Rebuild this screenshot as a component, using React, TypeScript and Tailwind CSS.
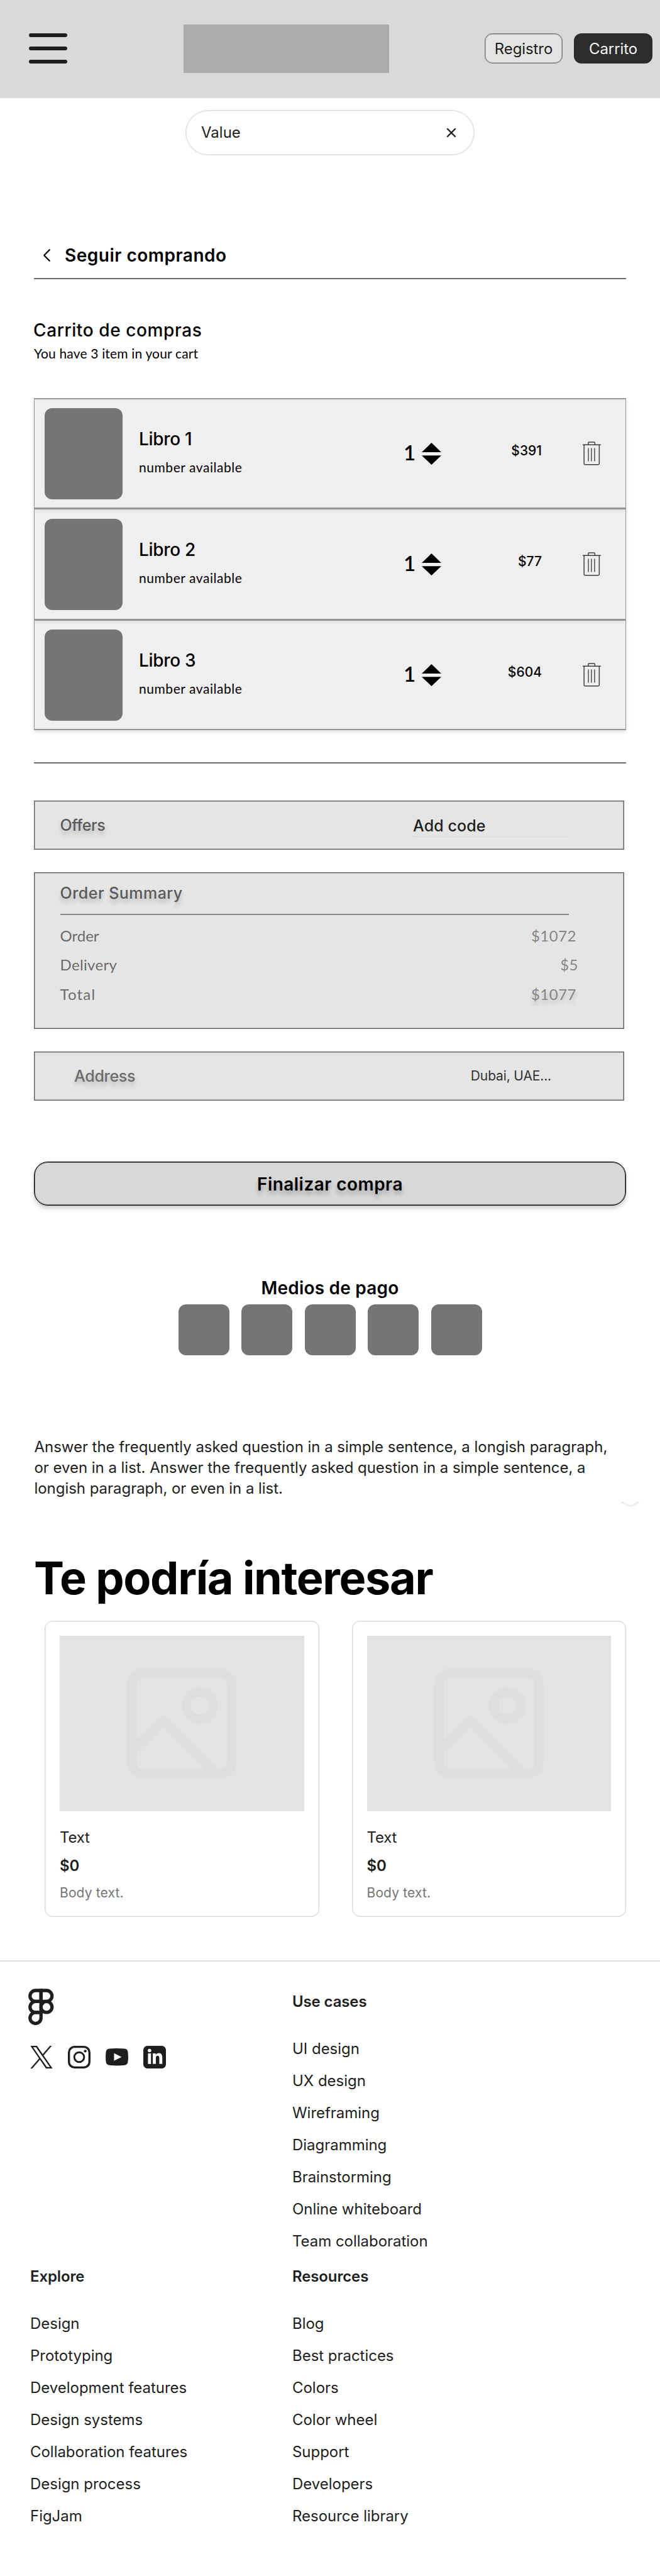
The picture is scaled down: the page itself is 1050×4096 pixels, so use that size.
import type { ReactNode } from 'react';

const books = [
  { title: 'Libro 1', price: '$391', box: 'h-[175px] border-b-[3px] z-30' },
  { title: 'Libro 2', price: '$77', box: 'h-[177px] border-b-[3px] z-20' },
  { title: 'Libro 3', price: '$604', box: 'h-[172px] z-10' },
];

const summary = [
  { label: 'Order', value: '$1072', space: 'tracking-normal', box: 'pr-[75px]', look: '' },
  { label: 'Delivery', value: '$5', space: 'tracking-[0.34px]', box: 'pr-[72px]', look: '' },
  {
    label: 'Total',
    value: '$1077',
    space: 'tracking-[1.2px]',
    box: 'pr-[75px]',
    look: '[text-shadow:0_6px_6px_rgba(0,0,0,0.18)]',
  },
];

const useCases = ['UI design', 'UX design', 'Wireframing', 'Diagramming', 'Brainstorming', 'Online whiteboard', 'Team collaboration'];
const explore = ['Design', 'Prototyping', 'Development features', 'Design systems', 'Collaboration features', 'Design process', 'FigJam'];
const resources = ['Blog', 'Best practices', 'Colors', 'Color wheel', 'Support', 'Developers', 'Resource library'];

function Stepper() {
  return (
    <svg width="31" height="35" viewBox="0 0 31 35" className="ml-[10px] shrink-0">
      <path d="M15.5 0L31 15H0Z" />
      <path d="M15.5 35L31 20.2H0Z" />
    </svg>
  );
}

function Trash() {
  return (
    <svg width="29" height="37.5" viewBox="0 0 121 156" fill="none" stroke="#3c3c3c" strokeWidth="6" strokeLinecap="round">
      <path d="M3 22H118" />
      <path d="M37 20V10Q37 4 43 4H75Q81 4 81 10V20" />
      <path d="M9 24V146Q9 153 16 153H103Q110 153 110 146V24" />
      <path d="M38 45V129M58 45V129M79 45V129" strokeWidth="5.5" />
    </svg>
  );
}

function FigmaMark() {
  return (
    <svg width="40.5" height="58.2" viewBox="0 0 168 243" fill="none" stroke="#1e1e1e" strokeWidth="22">
      <path d="M84 12.5H47.5a36.5 36.5 0 0 0 0 73H84Z" />
      <path d="M84 12.5h36.5a36.5 36.5 0 0 1 0 73H84Z" />
      <path d="M84 85.5H47.5a36.5 36.5 0 0 0 0 73H84Z" />
      <circle cx="120.5" cy="122" r="36.5" />
      <path d="M84 158.5H47.5A36.5 36.5 0 1 0 84 195Z" />
    </svg>
  );
}

function SocialIcons() {
  return (
    <div className="ml-[3px] mt-[33px] flex h-9 items-center gap-6">
      <svg width="36" height="36" viewBox="0 0 1200 1227" fill="#1e1e1e">
        <path d="M714.163 519.284L1160.89 0H1055.03L667.137 450.887L357.328 0H0L468.492 681.821L0 1226.37H105.866L515.491 750.218L842.672 1226.37H1200L714.137 519.284H714.163ZM569.165 687.828L521.697 619.934L144.011 79.6944H306.615L611.412 515.685L658.88 583.579L1055.08 1150.3H892.476L569.165 687.854V687.828Z" />
      </svg>
      <svg width="36" height="36" viewBox="0 0 150 150" fill="none" stroke="#1e1e1e" strokeWidth="14">
        <rect x="7" y="7" width="136" height="136" rx="37" />
        <circle cx="75" cy="75" r="32.5" strokeWidth="12.5" />
        <circle cx="115" cy="35" r="9" fill="#1e1e1e" stroke="none" />
      </svg>
      <svg width="36" height="27.4" viewBox="0 0 150 114" fill="#1e1e1e">
        <path
          fillRule="evenodd"
          d="M24 2.5Q75-2.5 126 2.5Q143 4 147.5 22Q152 57 147.5 92Q143 110 126 111.5Q75 116.5 24 111.5Q7 110 2.5 92Q-2 57 2.5 22Q7 4 24 2.5ZM56 32V82L106 57Z"
        />
      </svg>
      <svg width="36" height="36" viewBox="0 0 150 150">
        <rect width="150" height="150" rx="27" fill="#1e1e1e" />
        <g fill="#fff">
          <circle cx="41" cy="31" r="11.5" />
          <rect x="31" y="50" width="20" height="70" />
          <path d="M63 50H82V60C87 52 94 48 102 48C120 48 126 60 126 79V120H106V84C106 74 104 66 95 66C86 66 83 73 83 83V120H63Z" />
        </g>
      </svg>
    </div>
  );
}

function PlaceholderImage() {
  return (
    <div className="flex h-[279px] items-center justify-center bg-[#e3e3e3]">
      <svg width="174" height="175" viewBox="0 0 174 175" fill="none" stroke="#dedede" strokeWidth="15" strokeLinejoin="round">
        <rect x="7.5" y="7.5" width="159" height="160" rx="19" />
        <circle cx="116" cy="59" r="21.75" />
        <path d="M8 131L57 82L141 166" />
      </svg>
    </div>
  );
}

function ProductCard() {
  return (
    <article className="h-[471px] rounded-[12px] border border-[#d9d9d9] p-[23px] shadow-[inset_0_0_0_1px_rgba(217,217,217,0.5)]">
      <PlaceholderImage />
      <p className="mt-[25px] text-[24px] leading-[34px] tracking-[-0.2px] text-[#1e1e1e]">Text</p>
      <p className="mt-[11px] text-[24px] font-semibold leading-[34px] text-[#1e1e1e]">$0</p>
      <p className="mt-[11px] text-[21px] leading-[30px] tracking-[0.14px] text-[#757575]">Body text.</p>
    </article>
  );
}

function Panel({ className, children }: { className: string; children: ReactNode }) {
  return (
    <div
      className={`ml-[54px] w-[939px] border border-[#5a5a5a] bg-[#e5e5e5] shadow-[inset_0_0_0_1px_rgba(90,90,90,0.4)] ${className}`}
    >
      {children}
    </div>
  );
}

function LinkColumn({ title, links, className = '' }: { title: string; links: string[]; className?: string }) {
  return (
    <div className={`text-[24px] leading-[34px] text-[#1e1e1e] ${className}`}>
      <h3 className="font-semibold tracking-[-0.13px]">{title}</h3>
      <ul className="mt-[41px] flex flex-col gap-[17px] tracking-[-0.03px]">
        {links.map((l) => (
          <li key={l}>{l}</li>
        ))}
      </ul>
    </div>
  );
}

export default function App() {
  return (
    <div className="h-[4096px] w-[1050px] overflow-hidden bg-white font-['Inter',sans-serif] text-black">
      <header className="flex h-[156px] items-center bg-[#d9d9d9] pb-[2px] pl-[46px] text-[24px] tracking-[-0.1px]">
        <div className="flex w-[61px] flex-col gap-[15px]">
          <span className="h-[6px] rounded-full bg-[#1e1e1e]" />
          <span className="h-[6px] rounded-full bg-[#1e1e1e]" />
          <span className="h-[6px] rounded-full bg-[#1e1e1e]" />
        </div>
        <div className="ml-[185px] h-[77px] w-[327px] bg-[#acacac]" />
        <button className="ml-[152px] h-12 w-[124px] rounded-[12px] border border-[#767676] bg-[#e3e3e3] pt-[1px] text-[#1e1e1e] shadow-[inset_0_0_0_1px_rgba(118,118,118,0.5)]">
          Registro
        </button>
        <button className="ml-[18px] h-12 w-[125px] rounded-[12px] bg-[#2c2c2c] pt-[1px] text-[#f5f5f5]">Carrito</button>
      </header>

      <div className="mx-auto mt-[18.5px] flex h-[72px] w-[460px] items-center justify-between rounded-full border border-[#d9d9d9] px-[24px] shadow-[inset_0_0_0_1px_rgba(217,217,217,0.5)]">
        <span className="pt-[1px] text-[24px] text-[#1e1e1e]">Value</span>
        <svg width="24" height="24" viewBox="0 0 24 24" stroke="#1e1e1e" strokeWidth="2.4" strokeLinecap="round">
          <path d="M6 6L18 18M18 6L6 18" />
        </svg>
      </div>

      <div className="mt-[139px] flex h-10 items-center pl-[69px]">
        <svg width="11" height="20" viewBox="0 0 11 20" fill="none" stroke="#000" strokeWidth="2.2" strokeLinecap="round" strokeLinejoin="round">
          <path d="M9.8 1.2L1.2 10L9.8 18.8" />
        </svg>
        <span className="ml-[23px] text-[28px] font-semibold leading-[40px] tracking-[0.5px]">Seguir comprando</span>
      </div>
      <div className="ml-[54px] mt-[16.5px] h-[2px] w-[942px] bg-[#6e6e6e]" />

      <h1 className="ml-[53px] mt-[60.5px] text-[28px] font-medium leading-[40px] tracking-[0.6px]">Carrito de compras</h1>
      <p className="ml-[54px] mt-[4px] font-['Lato',sans-serif] text-[21px] leading-[25px] tracking-[0.17px]">
        You have 3 item in your cart
      </p>

      <section className="ml-[54px] mt-[59.5px] w-[942px] border-x border-y-2 border-[#999] bg-[#efefef] shadow-[0_3px_6px_rgba(0,0,0,0.1)]">
        {books.map((b) => (
          <div
            key={b.title}
            className={`relative flex items-center border-[#939393] bg-[#efefef] pl-[15.5px] shadow-[0_3px_6px_rgba(0,0,0,0.06)] ${b.box}`}
          >
            <div className="h-[145px] w-[124.5px] shrink-0 rounded-[12px] bg-[#757575]" />
            <div className="ml-[26px] w-[421px] pb-[10px]">
              <h2 className="text-[28px] font-medium leading-[40px] tracking-[-0.3px]">{b.title}</h2>
              <p className="mt-[12px] font-['Lato',sans-serif] text-[21px] leading-[25px] tracking-[0.55px]">number available</p>
            </div>
            <span className="w-[19px] pb-[4px] font-['Lato',sans-serif] text-[33px] font-semibold leading-[40px]">1</span>
            <Stepper />
            <span className="mr-[65px] w-[160px] pb-[8px] text-right text-[21px] font-medium leading-[30px]">{b.price}</span>
            <Trash />
          </div>
        ))}
      </section>

      <div className="ml-[54px] mt-[51px] h-[2px] w-[942px] bg-[#6e6e6e]" />

      <Panel className="mt-[59px] flex h-[78px] items-center pl-[40.5px] text-[25px] font-medium">
        <span className="pt-[1px] tracking-[-0.4px] text-[#5a5a5a] [text-shadow:0_6px_6px_rgba(0,0,0,0.2)]">Offers</span>
        <span className="ml-auto mr-[88px] mt-[2px] h-[35px] w-[248px] border-b border-dotted border-[#d2d2d2] pl-[1px] leading-[34px] tracking-[0.1px] text-[#1e1e1e]">
          Add code
        </span>
      </Panel>

      <Panel className="mt-[36px] h-[249px] pl-[40.5px] pt-[14px]">
        <h2 className="text-[25px] font-medium leading-[36px] tracking-[0.47px] text-[#5a5a5a] [text-shadow:0_6px_6px_rgba(0,0,0,0.2)]">
          Order Summary
        </h2>
        <div className="mb-[9.5px] mt-[15px] h-[2px] w-[809px] bg-[#868686]" />
        {summary.map((r) => (
          <div key={r.label} className={`flex justify-between font-['Lato',sans-serif] text-[24px] leading-[46.5px] ${r.box}`}>
            <span className={`text-[#6b6b6b] ${r.space}`}>{r.label}</span>
            <span className={`tracking-[0.5px] text-[#858585] ${r.look}`}>{r.value}</span>
          </div>
        ))}
      </Panel>

      <Panel className="mt-[36px] flex h-[78px] items-center justify-between pl-[63px] pr-[115px]">
        <span className="pt-[1px] text-[25px] font-medium tracking-[-0.3px] text-[#6b6b6b] [text-shadow:0_6px_6px_rgba(0,0,0,0.2)]">
          Address
        </span>
        <span className="text-[21px] tracking-[-0.14px] text-[#333]">Dubai, UAE...</span>
      </Panel>

      <button className="ml-[54px] mt-[97px] flex h-[70px] w-[942px] items-center justify-center rounded-[22px] border border-black bg-[#d8d8d8] pt-[1px] text-[28px] font-semibold tracking-[0.45px] shadow-[inset_0_0_0_1px_rgba(0,0,0,0.5),0_5px_6px_rgba(0,0,0,0.18)] [text-shadow:0_6px_6px_rgba(0,0,0,0.25)]">
        Finalizar compra
      </button>

      <section className="mt-[111px] flex flex-col items-center">
        <h2 className="text-[28px] font-semibold leading-[40px] tracking-[0.22px]">Medios de pago</h2>
        <div className="mt-[6px] flex gap-[19.5px]">
          {[0, 1, 2, 3, 4].map((i) => (
            <div key={i} className="size-[81px] rounded-[12px] bg-[#757575]" />
          ))}
        </div>
      </section>

      <p className="ml-[54.5px] mt-[128.5px] w-[930px] text-[24px] leading-[33px] tracking-[-0.04px] text-[#1e1e1e]">
        Answer the frequently asked question in a simple sentence, a longish paragraph, or even in a list. Answer the frequently asked
        question in a simple sentence, a longish paragraph, or even in a list.
      </p>
      <svg width="29" height="10" viewBox="0 0 29 10" fill="none" stroke="#ededed" strokeWidth="3" strokeLinecap="round" strokeLinejoin="round" className="ml-[988px] mt-[4px] block">
        <path d="M2 2L14.5 8L27 2" />
      </svg>

      <h2 className="ml-[54px] mt-[68px] text-[72px] font-bold leading-[88px] tracking-[-1.36px]">Te podría interesar</h2>
      <section className="ml-[71px] mt-[24.5px] grid w-[925px] grid-cols-2 gap-[52px]">
        <ProductCard />
        <ProductCard />
      </section>

      <div className="mt-[69px] h-[2px] bg-[#e1e1e1]" />
      <footer className="grid grid-cols-[417px_1fr] gap-y-[22px] pl-[48px] pt-[43px]">
        <div className="-ml-[3px]">
          <FigmaMark />
          <SocialIcons />
        </div>
        <LinkColumn title="Use cases" links={useCases} className="pt-[3.5px]" />
        <LinkColumn title="Explore" links={explore} />
        <LinkColumn title="Resources" links={resources} />
      </footer>
    </div>
  );
}
